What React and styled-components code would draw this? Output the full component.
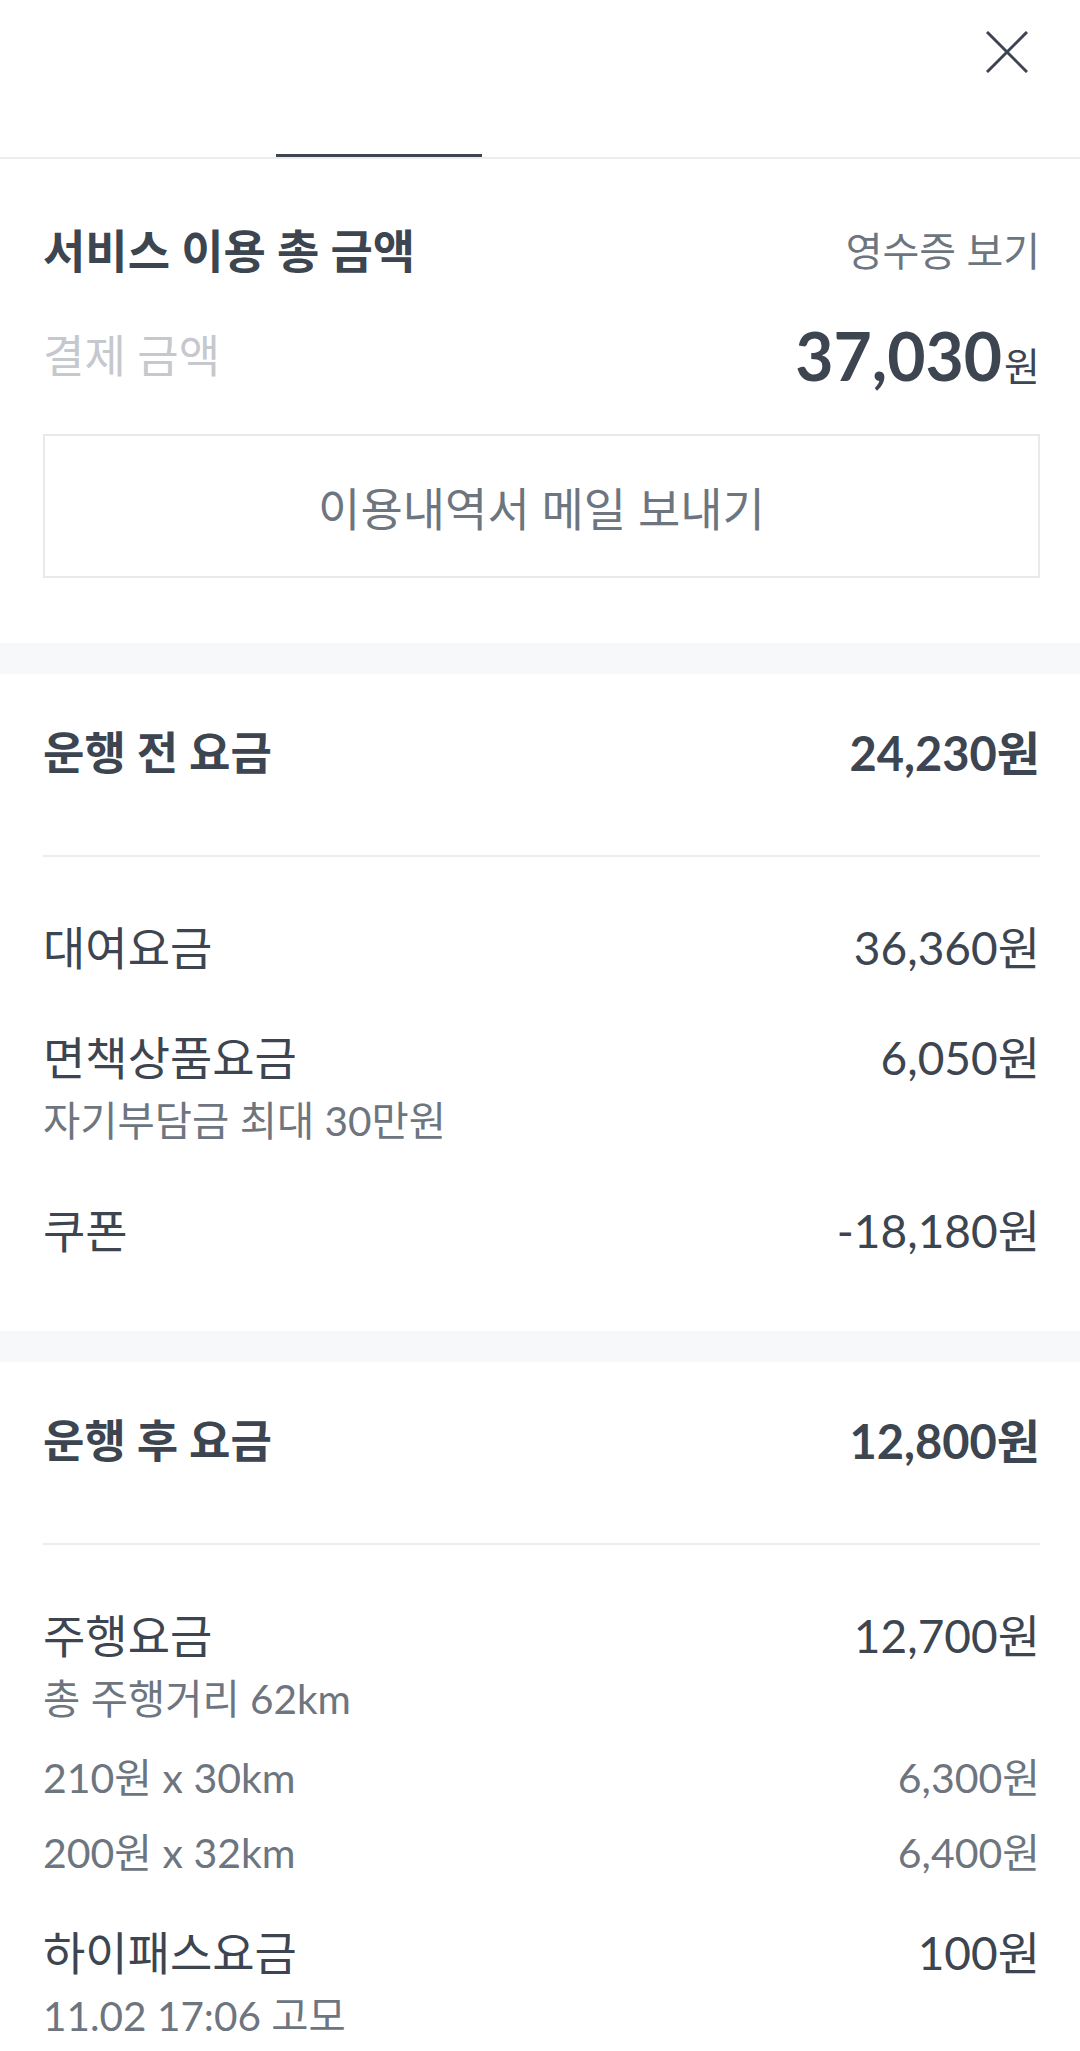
import React from 'react';
import styled, { createGlobalStyle } from 'styled-components';

const GlobalStyle = createGlobalStyle`
  html, body {
    margin: 0;
    padding: 0;
    background: #ffffff;
  }
  body {
    font-family: Lato, "Noto Sans CJK KR", sans-serif;
    color: #3c4550;
    -webkit-font-smoothing: antialiased;
  }
`;

const Page = styled.div`
  width: 1080px;
  min-height: 2051px;
  background: #ffffff;
  overflow: hidden;
`;

const Header = styled.header`
  border-bottom: 2px solid #ececec;
`;

const TopBar = styled.div`
  height: 104px;
  box-sizing: border-box;
  display: flex;
  justify-content: flex-end;
  align-items: flex-start;
  padding: 31px 52px 0 0;
`;

const CloseButton = styled.button`
  width: 42px;
  height: 42px;
  padding: 0;
  border: 0;
  background: none;
  display: flex;
  color: #3c4550;
  cursor: pointer;
`;

const TabBar = styled.nav`
  height: 53px;
  display: flex;
  padding-left: 276px;
`;

const Tab = styled.div`
  width: 206px;
  box-sizing: border-box;
  border-bottom: 3px solid ${(p) => (p.$active ? '#3c4550' : 'transparent')};
`;

const Summary = styled.section`
  padding: 62px 40px 65px 43px;
`;

const TitleRow = styled.div`
  display: flex;
  justify-content: space-between;
  align-items: center;
  height: 60px;
`;

const Title = styled.h2`
  margin: 0;
  font-size: 46px;
  font-weight: 700;
  line-height: 60px;
`;

const ReceiptLink = styled.a`
  font-size: 40px;
  line-height: 60px;
  color: #6d757f;
  text-decoration: none;
`;

const PaidRow = styled.div`
  display: flex;
  justify-content: space-between;
  align-items: center;
  margin-top: 35px;
  height: 80px;
`;

const PaidLabel = styled.span`
  font-size: 45px;
  line-height: 60px;
  color: #c5c8cc;
`;

const BigAmount = styled.span`
  font-size: 66px;
  font-weight: 700;
  line-height: 80px;
`;

const Unit = styled.span`
  font-size: 39px;
  font-weight: 400;
  line-height: 1;
  margin-left: 2px;
`;

const MailButton = styled.button`
  display: block;
  width: 100%;
  height: 144px;
  margin-top: 38px;
  box-sizing: border-box;
  border: 2px solid #e8e9ea;
  background: #ffffff;
  font-family: inherit;
  font-size: 46px;
  color: #6d757f;
  cursor: pointer;
`;

const Band = styled.div`
  height: 31px;
  background: #f7f8fa;
`;

const FeeSection = styled.section`
  padding: 0 40px 0 43px;
`;

const FeeHeader = styled.div`
  display: flex;
  justify-content: space-between;
  align-items: center;
  padding: 49px 0 72px;
  border-bottom: 2px solid #ececec;
  font-size: 45px;
  font-weight: 700;
  line-height: 60px;
`;

const ItemList = styled.div`
  display: flex;
  flex-direction: column;
  gap: 52px;
  padding: 62px 0 71px;
`;

const Item = styled.div`
  display: flex;
  flex-direction: column;
`;

const Row = styled.div`
  display: flex;
  justify-content: space-between;
  align-items: center;
  font-size: ${(p) => (p.$small ? '41px' : '46px')};
  line-height: 58px;
  color: ${(p) => (p.$small ? '#6d757f' : '#3c4550')};
`;

const Value = styled.span`
  font-size: ${(p) => p.$size || 'inherit'};
`;

const Note = styled.div`
  margin-top: 5px;
  font-size: 40.5px;
  line-height: 58px;
  color: #6d757f;
`;

const Breakdown = styled.div`
  display: flex;
  flex-direction: column;
  gap: 17px;
  margin: 21px 0 -10px;
`;

const CloseIcon = () => (
  <svg width="42" height="42" viewBox="0 0 42 42" fill="none">
    <path d="M1 1L41 41M41 1L1 41" stroke="currentColor" strokeWidth="3" />
  </svg>
);

const sections = [
  {
    title: '운행 전 요금',
    total: '24,230원',
    items: [
      { label: '대여요금', amount: '36,360원' },
      { label: '면책상품요금', amount: '6,050원', note: '자기부담금 최대 30만원' },
      { label: '쿠폰', amount: '-18,180원' },
    ],
  },
  {
    title: '운행 후 요금',
    total: '12,800원',
    items: [
      {
        label: '주행요금',
        amount: '12,700원',
        note: '총 주행거리 62km',
        breakdown: [
          { label: '210원 x 30km', amount: '6,300원' },
          { label: '200원 x 32km', amount: '6,400원' },
        ],
      },
      { label: '하이패스요금', amount: '100원', note: '11.02 17:06 고모' },
    ],
  },
];

export default function App() {
  return (
    <Page>
      <GlobalStyle />
      <Header>
        <TopBar>
          <CloseButton aria-label="닫기">
            <CloseIcon />
          </CloseButton>
        </TopBar>
        <TabBar>
          <Tab $active />
        </TabBar>
      </Header>

      <Summary>
        <TitleRow>
          <Title>서비스 이용 총 금액</Title>
          <ReceiptLink href="#">영수증 보기</ReceiptLink>
        </TitleRow>
        <PaidRow>
          <PaidLabel>결제 금액</PaidLabel>
          <BigAmount>
            37,030<Unit>원</Unit>
          </BigAmount>
        </PaidRow>
        <MailButton>이용내역서 메일 보내기</MailButton>
      </Summary>

      {sections.map((s) => (
        <React.Fragment key={s.title}>
          <Band />
          <FeeSection>
            <FeeHeader>
              <span>{s.title}</span>
              <Value $size="47px">{s.total}</Value>
            </FeeHeader>
            <ItemList>
              {s.items.map((it) => (
                <Item key={it.label}>
                  <Row>
                    <span>{it.label}</span>
                    <Value>{it.amount}</Value>
                  </Row>
                  {it.note && <Note>{it.note}</Note>}
                  {it.breakdown && (
                    <Breakdown>
                      {it.breakdown.map((b) => (
                        <Row $small key={b.label}>
                          <span>{b.label}</span>
                          <Value>{b.amount}</Value>
                        </Row>
                      ))}
                    </Breakdown>
                  )}
                </Item>
              ))}
            </ItemList>
          </FeeSection>
        </React.Fragment>
      ))}
    </Page>
  );
}
